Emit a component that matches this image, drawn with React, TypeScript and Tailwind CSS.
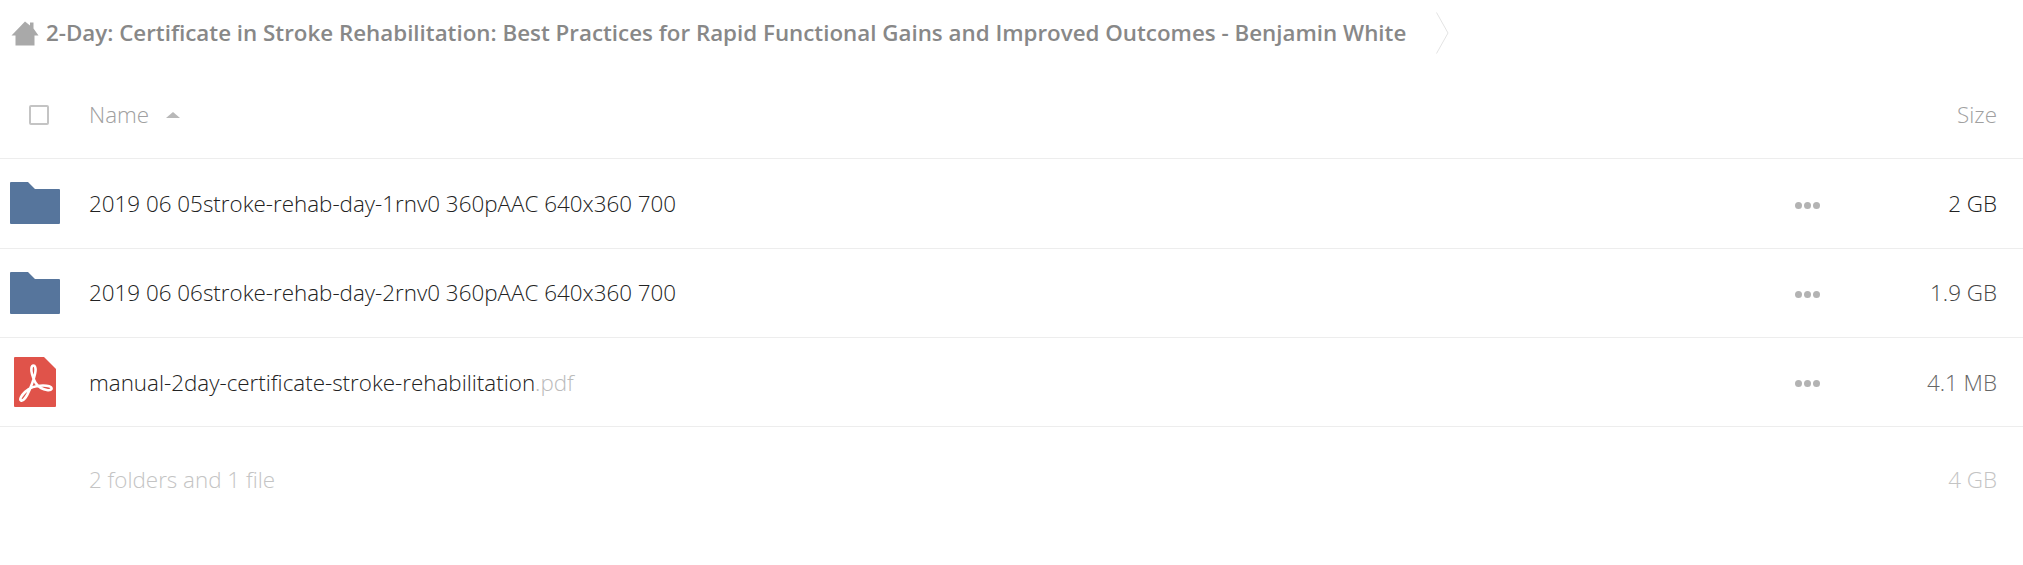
const font = "font-['Open_Sans',sans-serif]"

const HomeIcon = () => (
    <svg className="w-[28px] h-[25px] shrink-0" viewBox="0 0 28 25">
        <path d="M14 0.5 L19 4.5 V1.5 H22.5 V7.5 L27.5 14.5 H23.5 V24.5 H4.5 V14.5 H0.5 Z" fill="#a9a9a9" />
    </svg>
)

const FolderIcon = () => (
    <svg className="w-[50px] h-[42px]" viewBox="0 0 50 42">
        <path d="M1 0 H18 L25 7 H49 Q50 7 50 8 V41 Q50 42 49 42 H1 Q0 42 0 41 V1 Q0 0 1 0 Z" fill="#56759c" />
    </svg>
)

const PdfIcon = () => (
    <svg className="w-[42px] h-[50px]" viewBox="0 0 42 50">
        <path d="M1 0 H30 L42 12 V49 Q42 50 41 50 H1 Q0 50 0 49 V1 Q0 0 1 0 Z" fill="#e0534a" />
        <path
            d="M19.5 8.5 C17 8.5 17 13 18 17 C19.5 23 23 29 27 31 C30 32.5 36 34.5 37.5 32 C38.5 29.5 33 28.5 29 28.5 C22 28.5 15 31 11 35 C8 38 5 42 7 43.5 C9.5 44.5 13 39 15.5 33 C18 27 21 20 21.5 14 C21.8 11 21 8.5 19.5 8.5 Z"
            fill="none"
            stroke="#ffffff"
            strokeWidth="2.6"
        />
    </svg>
)

const Dots = () => (
    <div className="flex gap-[2px] ml-auto mt-[4px]">
        <span className="w-[7px] h-[7px] rounded-full bg-[#b3b3b3]" />
        <span className="w-[7px] h-[7px] rounded-full bg-[#b3b3b3]" />
        <span className="w-[7px] h-[7px] rounded-full bg-[#b3b3b3]" />
    </div>
)

const rows = [
    { name: "2019 06 05stroke-rehab-day-1rnv0 360pAAC 640x360 700", size: "2 GB", icon: <FolderIcon />, sizeClass: "text-[#222222]" },
    { name: "2019 06 06stroke-rehab-day-2rnv0 360pAAC 640x360 700", size: "1.9 GB", icon: <FolderIcon />, sizeClass: "text-[#444444]" },
    { name: "manual-2day-certificate-stroke-rehabilitation", ext: ".pdf", size: "4.1 MB", icon: <PdfIcon />, sizeClass: "text-[#666666]" },
]

const App = () => {
    return (
        <div className={`${font} w-full min-h-[565px] bg-white text-[22.4px] font-light`}>
            <div className="flex items-center h-[66px] pl-[11px]">
                <HomeIcon />
                <span className="ml-[7px] text-[22.35px] font-semibold text-[#888888]">
                    2-Day: Certificate in Stroke Rehabilitation: Best Practices for Rapid Functional Gains and Improved Outcomes - Benjamin White
                </span>
                <svg className="ml-[30px] w-[13px] h-[42px]" viewBox="0 0 13 42">
                    <path d="M0.5 0.5 L12 21 L0.5 41.5" fill="none" stroke="#e3e3e3" />
                </svg>
            </div>

            <div className="flex items-center h-[93.4px] pt-[5px] border-b border-[#ededed] text-[#a0a0a0]">
                <div className="w-[89px] pl-[29px]">
                    <div className="w-[20px] h-[20px] border-2 border-[#c4c4c4] rounded-[2px]" />
                </div>
                <span>Name</span>
                <span className="ml-[17px] w-0 h-0 border-x-[7px] border-x-transparent border-b-[6px] border-b-[#b8b8b8]" />
                <span className="ml-auto pr-[26px]">Size</span>
            </div>

            {rows.map((row) => (
                <div key={row.name} className="flex items-center h-[89.2px] border-b border-[#ededed] text-[#222222]">
                    <div className="w-[89px] pl-[10px] flex">
                        <div className={row.ext ? "pl-[4px]" : ""}>{row.icon}</div>
                    </div>
                    <span className="pt-[1px]">
                        {row.name}
                        {row.ext && <span className="text-[#bbbbbb]">{row.ext}</span>}
                    </span>
                    <Dots />
                    <span className={`w-[177px] mr-[26px] pt-[1px] text-right ${row.sizeClass}`}>{row.size}</span>
                </div>
            ))}

            <div className="flex items-center justify-between h-[106px] pl-[89px] pr-[26px] text-[#c4c4c4]">
                <span>2 folders and 1 file</span>
                <span>4 GB</span>
            </div>
        </div>
    )
}

export default App
